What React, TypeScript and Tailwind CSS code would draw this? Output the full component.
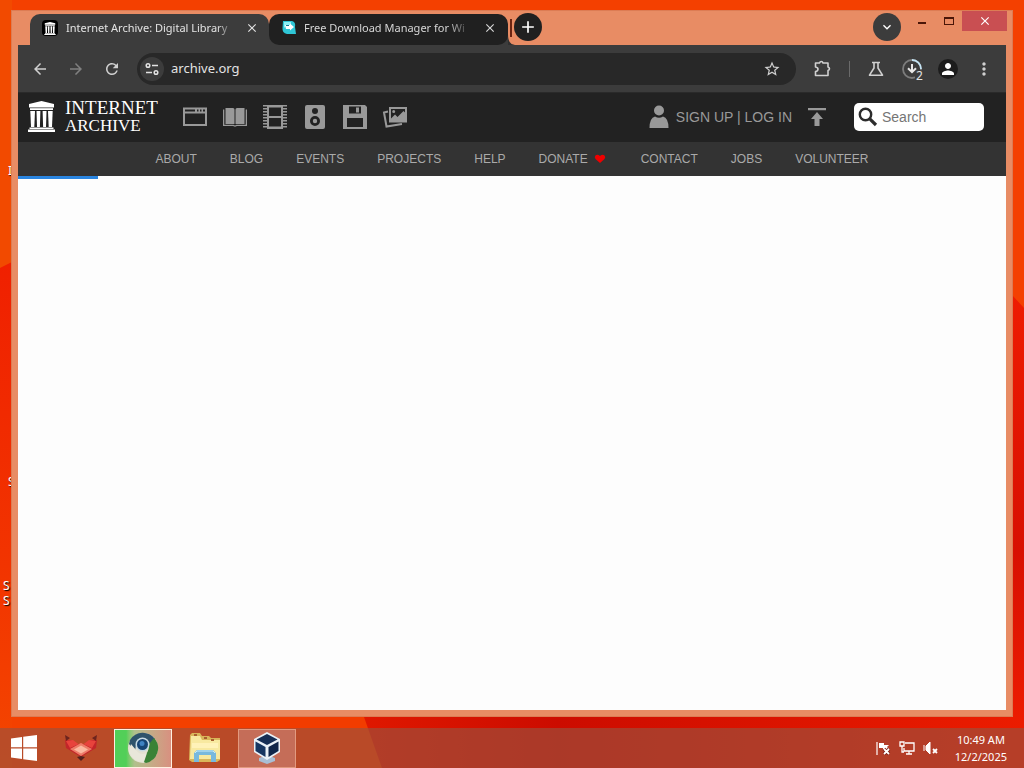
import React from 'react';
import {
  MdArrowBack,
  MdArrowForward,
  MdRefresh,
  MdStarBorder,
  MdMoreVert,
  MdPerson,
  MdClose,
  MdAdd,
  MdKeyboardArrowDown
} from 'react-icons/md';

const Wallpaper: React.FC = () => (
  <svg className="absolute inset-0 w-full h-full -z-10" viewBox="0 0 1024 768" preserveAspectRatio="none" aria-hidden="true">
    <defs>
      <linearGradient id="leftRed" x1="0" y1="0" x2="0" y2="1">
        <stop offset="0" stopColor="#f02000" />
        <stop offset="0.6" stopColor="#f23400" />
        <stop offset="1" stopColor="#f44600" />
      </linearGradient>
      <linearGradient id="rightRed" x1="0" y1="0" x2="0" y2="1">
        <stop offset="0" stopColor="#ee1c00" />
        <stop offset="0.6" stopColor="#d81000" />
        <stop offset="1" stopColor="#ec1c00" />
      </linearGradient>
      <linearGradient id="bottomRed" x1="0" y1="0" x2="1" y2="0">
        <stop offset="0" stopColor="#e01800" />
        <stop offset="0.3" stopColor="#cc0c00" />
        <stop offset="1" stopColor="#ec1c00" />
      </linearGradient>
    </defs>
    <rect width="1024" height="768" fill="#f44000" />
    <path d="M0 0H12V262L0 268Z" fill="#f24a00" />
    <path d="M0 268L12 262V768H0Z" fill="url(#leftRed)" />
    <path d="M200 700H365L382 768H200Z" fill="#f23c00" />
    <path d="M358 700H1024V768H382Z" fill="url(#bottomRed)" />
    <path d="M1012 295L1024 308V720H1012Z" fill="url(#rightRed)" />
  </svg>
);

const ArchiveLogo: React.FC<{ className?: string }> = ({ className }) => (
  <svg className={className} viewBox="0 0 27 31" fill="currentColor" aria-hidden="true">
    <path d="M13.500 0L26 3V6.500H1V3Z" />
    <path d="M2 7.200H25V9H2Z" />
    <path d="M2.300 10H7L6.300 26H3Z" />
    <path d="M8.500 10H12.400L11.900 26H9Z" />
    <path d="M14.600 10H18.500L18 26H15.100Z" />
    <path d="M20 10H24.700L24 26H20.700Z" />
    <path d="M1.500 26.500H25.500V28H1.500ZM0 28.500H27V31H0Z" />
  </svg>
);

const mediaIcons = [
  {
    label: 'Web',
    art: (
      <path
        d="M1 3.500H25V22H1Z M3 9.500V20H23V9.500Z M3 5.500V7.500H13V5.500Z M15 5.500V7.500H16.500V5.500Z M18 5.500V7.500H19.500V5.500Z M21 5.500V7.500H23V5.500Z"
        fillRule="evenodd"
      />
    )
  },
  {
    label: 'Texts',
    art: (
      <>
        <path d="M3.500 4H11Q12.500 4 12.500 5.500V20H3.500Z M22.500 4H15Q13.500 4 13.500 5.500V20H22.500Z" />
        <path d="M1 5.500H2.300V20.800H11.500L13 21.500L14.500 20.800H23.700V5.500H25V22H15L13 22.800L11 22H1Z" />
      </>
    )
  },
  {
    label: 'Video',
    art: (
      <>
        <path d="M5 1H21V25H5Z M7 3.500V12H19V3.500Z M7 14V22.500H19V14Z" fillRule="evenodd" />
        <path d="M3 1V25M23 1V25" stroke="currentColor" strokeWidth="4" strokeDasharray="1.500 1.500" />
      </>
    )
  },
  {
    label: 'Audio',
    art: (
      <path
        d="M5 1H21Q23 1 23 3V23Q23 25 21 25H5Q3 25 3 23V3Q3 1 5 1Z M13 4A3 3 0 1 0 13 10A3 3 0 1 0 13 4Z M13 12A5 5 0 1 0 13 22A5 5 0 1 0 13 12Z M13 14.800A2.200 2.200 0 1 1 13 19.200A2.200 2.200 0 1 1 13 14.800Z"
        fillRule="evenodd"
      />
    )
  },
  {
    label: 'Software',
    art: (
      <path
        d="M1 1H23L25 3V25H1Z M7 2.500V9.500H19V2.500Z M14 3.500H17V8.500H14Z M5 14V23H21V14Z"
        fillRule="evenodd"
      />
    )
  },
  {
    label: 'Images',
    art: (
      <>
        <path d="M7 3H25V18.500H7Z M9 5V14.500L13 10.500L15.500 13L21.500 7L23 8.500V5Z M11.700 6A1.500 1.500 0 1 1 11.700 9A1.500 1.500 0 1 1 11.700 6Z" fillRule="evenodd" />
        <path d="M6 7.500L2 8.500L4.500 22.500L20 20" fill="none" stroke="currentColor" strokeWidth="2" />
      </>
    )
  }
];

const navItems = ['ABOUT', 'BLOG', 'EVENTS', 'PROJECTS', 'HELP', 'DONATE', 'CONTACT', 'JOBS', 'VOLUNTEER'];

const TitleBar: React.FC = () => (
  <div className="flex items-start h-[34px] pl-3">
    <div className="flex h-full pt-[3px]">
      <div className="flex items-center w-[239px] h-full pb-[3px] bg-[#3c3c3c] rounded-t-[10px] pl-3 pr-[7px]">
        <span className="flex items-center justify-center w-4 h-4 bg-black rounded-sm shrink-0">
          <ArchiveLogo className="w-3 h-[13px] text-white" />
        </span>
        <span className="flex-1 ml-2 text-[11px] whitespace-nowrap overflow-hidden text-[#e3e3e3] mask-r-from-90%">
          Internet Archive: Digital Library
        </span>
        <button aria-label="Close tab" className="flex items-center justify-center w-5 h-5 ml-2 text-[#e3e3e3]">
          <MdClose className="w-[14px] h-[14px]" />
        </button>
      </div>
      <div className="h-full bg-linear-to-b from-transparent from-50% to-[#3c3c3c] to-50%">
        <div className="flex items-center w-[239px] h-full pb-[3px] bg-[#202020] rounded-[10px] pl-3 pr-2">
          <svg className="w-4 h-4 shrink-0" viewBox="0 0 16 16" aria-hidden="true">
            <path d="M2 1H11Q15 2 14 7L15 14H6Q1 13 1.500 8Z" fill="#2fc6d6" />
            <path d="M3 2H10V6H5L3 8Z" fill="#8ff0f5" />
            <path d="M4 5H9V3.500L13 7L9 10.500V9H5Z" fill="#fff" />
            <path d="M5 5.500H8" stroke="#147c96" />
          </svg>
          <span className="flex-1 ml-[7px] text-[11px] whitespace-nowrap overflow-hidden text-[#d6d6d6] mask-r-from-85%">
            Free Download Manager for Wi
          </span>
          <button aria-label="Close tab" className="flex items-center justify-center w-5 h-5 ml-2 text-[#d6d6d6]">
            <MdClose className="w-[14px] h-[14px]" />
          </button>
        </div>
      </div>
      <svg className="w-[7px] h-full" viewBox="0 0 7 31" aria-hidden="true">
        <path d="M0 20Q0 31 7 31H0Z" fill="#303030" />
        <path d="M3 5V23" stroke="#6a2412" strokeWidth="2" />
      </svg>
    </div>
    <button aria-label="New tab" className="flex items-center justify-center w-7 h-7 mt-0.5 -ml-px rounded-full bg-[#202020] text-white">
      <MdAdd className="w-5 h-5" />
    </button>
    <button aria-label="Search tabs" className="flex items-center justify-center w-7 h-7 mt-0.5 ml-auto mr-[7px] rounded-full bg-[#3c3c3c] text-white">
      <MdKeyboardArrowDown className="w-4 h-4" />
    </button>
    <button aria-label="Minimize" className="flex items-center justify-center w-[27px] h-5">
      <span className="w-2 h-0.5 mt-1 bg-[#4a1608]" />
    </button>
    <button aria-label="Maximize" className="flex items-center justify-center w-[27px] h-5">
      <span className="w-[10px] h-2 border border-t-2 border-[#4a1608]" />
    </button>
    <button aria-label="Close" className="flex items-center justify-center w-[45px] h-5 -mr-px bg-[#c94f52] text-white">
      <MdClose className="w-[14px] h-[14px]" />
    </button>
  </div>
);

const Toolbar: React.FC = () => (
  <div className="flex items-center h-12 px-1 bg-[#3c3c3c] border-b border-[#2a2a2a] text-[#d0d0d0]">
    <button aria-label="Back" className="flex justify-center w-9"><MdArrowBack className="w-[18px] h-[18px]" /></button>
    <button aria-label="Forward" className="flex justify-center w-9 text-[#808080]"><MdArrowForward className="w-[18px] h-[18px]" /></button>
    <button aria-label="Reload" className="flex justify-center w-9"><MdRefresh className="w-[18px] h-[18px]" /></button>
    <div className="flex flex-1 items-center h-8 ml-[7px] mr-2 pl-[3px] pr-[15px] rounded-full bg-[#282828]">
      <button aria-label="Site information" className="flex items-center justify-center w-6 h-6 rounded-full bg-[#3c3c3c]">
        <svg className="w-4 h-4" viewBox="0 0 16 16" fill="none" stroke="#e3e3e3" strokeWidth="1.500" aria-hidden="true">
          <circle cx="4" cy="4.500" r="1.800" />
          <path d="M8 4.500H14M2 11.500H8" />
          <circle cx="12" cy="11.500" r="1.800" />
        </svg>
      </button>
      <input aria-label="Address" defaultValue="archive.org" className="flex-1 min-w-0 ml-[7px] text-[13px] text-[#e3e3e3] bg-transparent outline-none" />
      <button aria-label="Bookmark"><MdStarBorder className="w-[18px] h-[18px]" /></button>
    </div>
    <button aria-label="Extensions" className="flex justify-center w-9">
      <svg className="w-[18px] h-[18px]" viewBox="0 0 18 18" fill="none" stroke="currentColor" strokeWidth="1.600" aria-hidden="true">
        <path d="M2.500 3H6.500Q7 1.500 8.300 1.500T10 3H15V7Q16.500 7.500 16.500 8.700T15 10.500V15.500H2.500V11.500Q5 11 5 9.200T2.500 7Z" strokeLinejoin="round" />
      </svg>
    </button>
    <span className="flex justify-center w-[18px]"><span className="w-px h-4 bg-[#6a6a6a]" /></span>
    <button aria-label="Labs" className="flex justify-center w-9">
      <svg className="w-[18px] h-[18px]" viewBox="0 0 18 18" fill="none" stroke="currentColor" strokeWidth="1.600" aria-hidden="true">
        <path d="M5 2.500H13M7 2.500V8L2.500 15.200H15.500L11 8V2.500" strokeLinejoin="round" />
      </svg>
    </button>
    <button aria-label="Downloads" className="relative flex justify-center w-9">
      <svg className="w-5 h-5" viewBox="0 0 20 20" fill="none" strokeWidth="1.800" aria-hidden="true">
        <circle cx="10" cy="10" r="9" stroke="#7c7c7c" />
        <path d="M10 1A9 9 0 0 1 19 10" stroke="#c4e4f4" />
        <path d="M10 5V13M6 9.200L10 13.200L14 9.200" stroke="#e8e8e8" strokeWidth="2" />
      </svg>
      <span className="absolute left-[21px] top-[11px] px-px text-xs leading-3 bg-[#3c3c3c] text-[#e3e3e3] rounded-sm">2</span>
    </button>
    <button aria-label="Profile" className="flex justify-center w-9">
      <span className="flex items-center justify-center w-5 h-5 rounded-full bg-[#1c1c1c] text-white"><MdPerson className="w-[18px] h-[18px]" /></span>
    </button>
    <button aria-label="Menu" className="flex justify-center w-9"><MdMoreVert className="w-5 h-5" /></button>
  </div>
);

const ArchivePage: React.FC = () => (
  <div className="flex flex-col flex-1 bg-[#fdfdfd] font-['Liberation_Sans',Arial,sans-serif]">
    <header>
      <div className="flex items-center h-[49px] pl-[10px] pr-[22px] pb-0.5 bg-[#222222] text-[#999999]">
        <a href="#home" className="flex items-center w-[147px] text-white">
          <ArchiveLogo className="w-[27px] h-[31px] shrink-0" />
          <span className="flex flex-col ml-[10px] font-['Liberation_Serif','Times_New_Roman',serif] leading-[18px]">
            <span className="text-[19px]">INTERNET</span>
            <span className="text-[17px]">ARCHIVE</span>
          </span>
        </a>
        {mediaIcons.map((item) => (
          <a key={item.label} href={`#${item.label.toLowerCase()}`} aria-label={item.label} className="flex justify-center w-10">
            <svg className="w-[26px] h-[26px]" viewBox="0 0 26 26" fill="currentColor" aria-hidden="true">{item.art}</svg>
          </a>
        ))}
        <a href="#login" className="flex items-center ml-auto text-sm whitespace-nowrap">
          <svg className="w-5 h-6 mr-[7px]" viewBox="0 0 20 24" fill="currentColor" aria-hidden="true">
            <circle cx="10" cy="5.500" r="5" />
            <path d="M0.500 23Q0.500 13 6 11.500Q10 14 14 11.500Q19.500 13 19.500 23Z" />
          </svg>
          SIGN UP | LOG IN
        </a>
        <a href="#upload" aria-label="Upload" className="ml-4">
          <svg className="w-[18px] h-[18px]" viewBox="0 0 18 18" fill="currentColor" aria-hidden="true">
            <path d="M0 0H18V2.200H0ZM9 4L15 11H11.500V18H6.500V11H3Z" />
          </svg>
        </a>
        <label className="flex items-center w-[130px] h-7 ml-7 pl-1 rounded-[5px] bg-white">
          <svg className="w-5 h-5 shrink-0" viewBox="0 0 20 20" fill="none" stroke="#2c2c2c" aria-hidden="true">
            <circle cx="7.500" cy="7.500" r="5.700" strokeWidth="2.400" />
            <path d="M11.800 11.800L18 18" strokeWidth="3.200" />
          </svg>
          <input aria-label="Search" placeholder="Search" className="w-full min-w-0 ml-1 text-sm text-[#333333] placeholder:text-[#757575] outline-none" />
        </label>
      </div>
      <nav className="flex items-center justify-center gap-[33px] h-[34px] bg-[#333333] text-xs text-[#aaaaaa]">
        {navItems.map((item) => (
          <a key={item} href={`#${item.toLowerCase()}`} className="flex items-center">
            {item}
            {item === 'DONATE' && (
              <svg className="w-3 h-[10px] ml-[6px] mr-0.5" viewBox="0 0 12 10" fill="#f00000" aria-hidden="true">
                <path d="M6 9L1.500 5Q0 3 1.500 1.500Q3.500 0 6 2Q8.500 0 10.500 1.500Q12 3 10.500 5Z" />
              </svg>
            )}
          </a>
        ))}
      </nav>
    </header>
    {/* Page load progress */}
    <div className="w-20 h-[3px] bg-[#2a85e0]" />
  </div>
);

const Taskbar: React.FC = () => (
  <footer className="flex items-center gap-1 h-10 pr-[17px] bg-[#9a523e]/65 text-white">
    <button aria-label="Start" className="flex justify-center w-12">
      <svg className="w-[26px] h-[26px]" viewBox="0 0 26 26" fill="#fff" aria-hidden="true">
        <path d="M0 3.500L11 2V12.300H0ZM12.200 1.800L26 0V12.300H12.200ZM0 13.600H11V24L0 22.500ZM12.200 13.600H26V26L12.200 24.200Z" />
      </svg>
    </button>
    <button aria-label="Fox" className="flex justify-center w-[58px]">
      <svg className="w-8 h-[26px]" viewBox="0 0 32 26" aria-hidden="true">
        <path d="M0 5L6 5L16 11L26 5L32 5L31 13L16 22L1 13Z" fill="#c3252a" />
        <path d="M0 0L5 3L1 6ZM32 0L27 3L31 6Z" fill="#6c241e" />
        <path d="M1 6L8 5L16 11L24 5L31 6L27 13L16 8L5 13Z" fill="#e8433c" />
        <path d="M5 14L16 8L27 14L16 21Z" fill="#ee7c68" />
        <path d="M9 14.500L16 10.500L23 14.500L16 18.500Z" fill="#fbb8a0" />
        <path d="M12 22L16 21L20 22L16 26Z" fill="#54201c" />
      </svg>
    </button>
    <button aria-label="Browser" className="flex items-center justify-center w-[58px] h-[39px] border border-[#fff0e0] bg-linear-to-r from-[#52cf58] from-20% via-[#b0c08c] via-35% to-[#d89080] to-100%">
      <svg className="w-8 h-8" viewBox="0 0 32 32" aria-hidden="true">
        <circle cx="16" cy="16" r="15" fill="#e3e1d2" />
        <path d="M3 8A15 15 0 0 1 28 7L23 12L15 8L9 13L8 19L2 12Z" fill="#2e536b" />
        <path d="M27 6A15 15 0 0 1 19 31Q13 29 16 24Q22 22 22 12Z" fill="#3a8236" />
        <path d="M4 12L9 18Q13 24 20 21L17 30Q6 30 2 20Z" fill="#e9e7da" />
        <circle cx="15.500" cy="12.500" r="7" fill="#c6dae4" />
        <circle cx="15.500" cy="12.500" r="5.500" fill="#174574" />
        <circle cx="15" cy="11.500" r="2.500" fill="#3f83c2" />
      </svg>
    </button>
    <button aria-label="File Explorer" className="flex justify-center w-[58px]">
      <svg className="w-8 h-[30px]" viewBox="0 0 32 30" aria-hidden="true">
        <path d="M1 2L3 0H11L13 3H20L22 5H31V27L28 29H3L0 27Z" fill="#d9b65a" />
        <path d="M2 3H11L13 7H31V26H1Z" fill="#f8e9a0" />
        <path d="M3 10H29V15H3Z" fill="#fff2b8" />
        <path d="M5 2H8M15 5H18M22 7H25" stroke="#a86030" strokeWidth="2" />
        <path d="M5 29V20L8 17H24L27 20V29H22V22H10V29Z" fill="#79b9dd" />
        <path d="M6 20L8 18H24L26 20" stroke="#c7ecfb" fill="none" />
      </svg>
    </button>
    <button aria-label="VirtualBox" className="flex items-center justify-center w-[58px] h-[39px] border border-[#e29a80] bg-[#c56d58]">
      <svg className="w-8 h-8" viewBox="0 0 32 32" aria-hidden="true">
        <path d="M8 26L16 23L24 26V29L16 32L8 29Z" fill="#a9bfd5" />
        <path d="M16 0L29 7V20L16 28L3 20V7Z" fill="#eaf1f7" />
        <path d="M16 2L26.500 7.500L16 13L5.500 7.500Z" fill="#152e55" />
        <path d="M4.500 9.500L14.500 15V25L4.500 19Z" fill="#173661" />
        <path d="M27.500 9.500L17.500 15V25L27.500 19Z" fill="#10264a" />
      </svg>
    </button>
    <div className="flex items-center gap-2 ml-auto mr-3">
      <svg className="w-4 h-4" viewBox="0 0 16 16" aria-hidden="true">
        <path d="M2 2V15" stroke="#fff" strokeWidth="1.200" />
        <path d="M4 3H9V5H14L12 7L14 9H8V8H4Z" fill="#fff" />
        <path d="M9 9L14 14M14 9L9 14" stroke="#7c1c14" strokeWidth="3.500" />
        <path d="M9 9L14 14M14 9L9 14" stroke="#fff" strokeWidth="1.800" />
      </svg>
      <svg className="w-4 h-4" viewBox="0 0 16 16" fill="none" stroke="#fff" strokeWidth="1.300" aria-hidden="true">
        <path d="M6 3H15V11H5V8M10 11V14M7 14H13M1 2H5V6H1ZM3 6V12H5" />
      </svg>
      <svg className="w-4 h-4" viewBox="0 0 16 16" aria-hidden="true">
        <path d="M1 5V11M3 6L7 2V14L3 10Z" fill="#fff" stroke="#fff" />
        <path d="M10 9L14 13M14 9L10 13" stroke="#fff" strokeWidth="1.800" />
      </svg>
    </div>
    <time className="text-[11px] leading-[17px] text-center">
      10:49 AM
      <br />
      12/2/2025
    </time>
  </footer>
);

const App: React.FC = () => {
  return (
    <div className="relative isolate flex flex-col min-h-screen overflow-hidden font-['Noto_Sans','Segoe_UI',sans-serif]">
      <Wallpaper />
      {/* Desktop icon labels showing past the window edge */}
      <div className="absolute inset-y-0 left-0 w-[11px] overflow-hidden text-xs leading-[15px] text-white text-shadow-[1px_1px_1px_#000]">
        <span className="absolute left-[8px] top-[163px]">I</span>
        <span className="absolute left-[8px] top-[474px]">S</span>
        <span className="absolute left-[3px] top-[578px]">S<br />S</span>
      </div>
      <main className="relative flex flex-col flex-1 px-[11px] pt-[10px] pb-[11px]">
        <div className="flex flex-col flex-1 px-[6px] pb-[6px] border border-[#dc7c54] bg-[#e88c64]">
          <TitleBar />
          <div className="flex flex-col flex-1">
            <Toolbar />
            <ArchivePage />
          </div>
        </div>
      </main>
      <Taskbar />
    </div>
  );
};

export default App;
